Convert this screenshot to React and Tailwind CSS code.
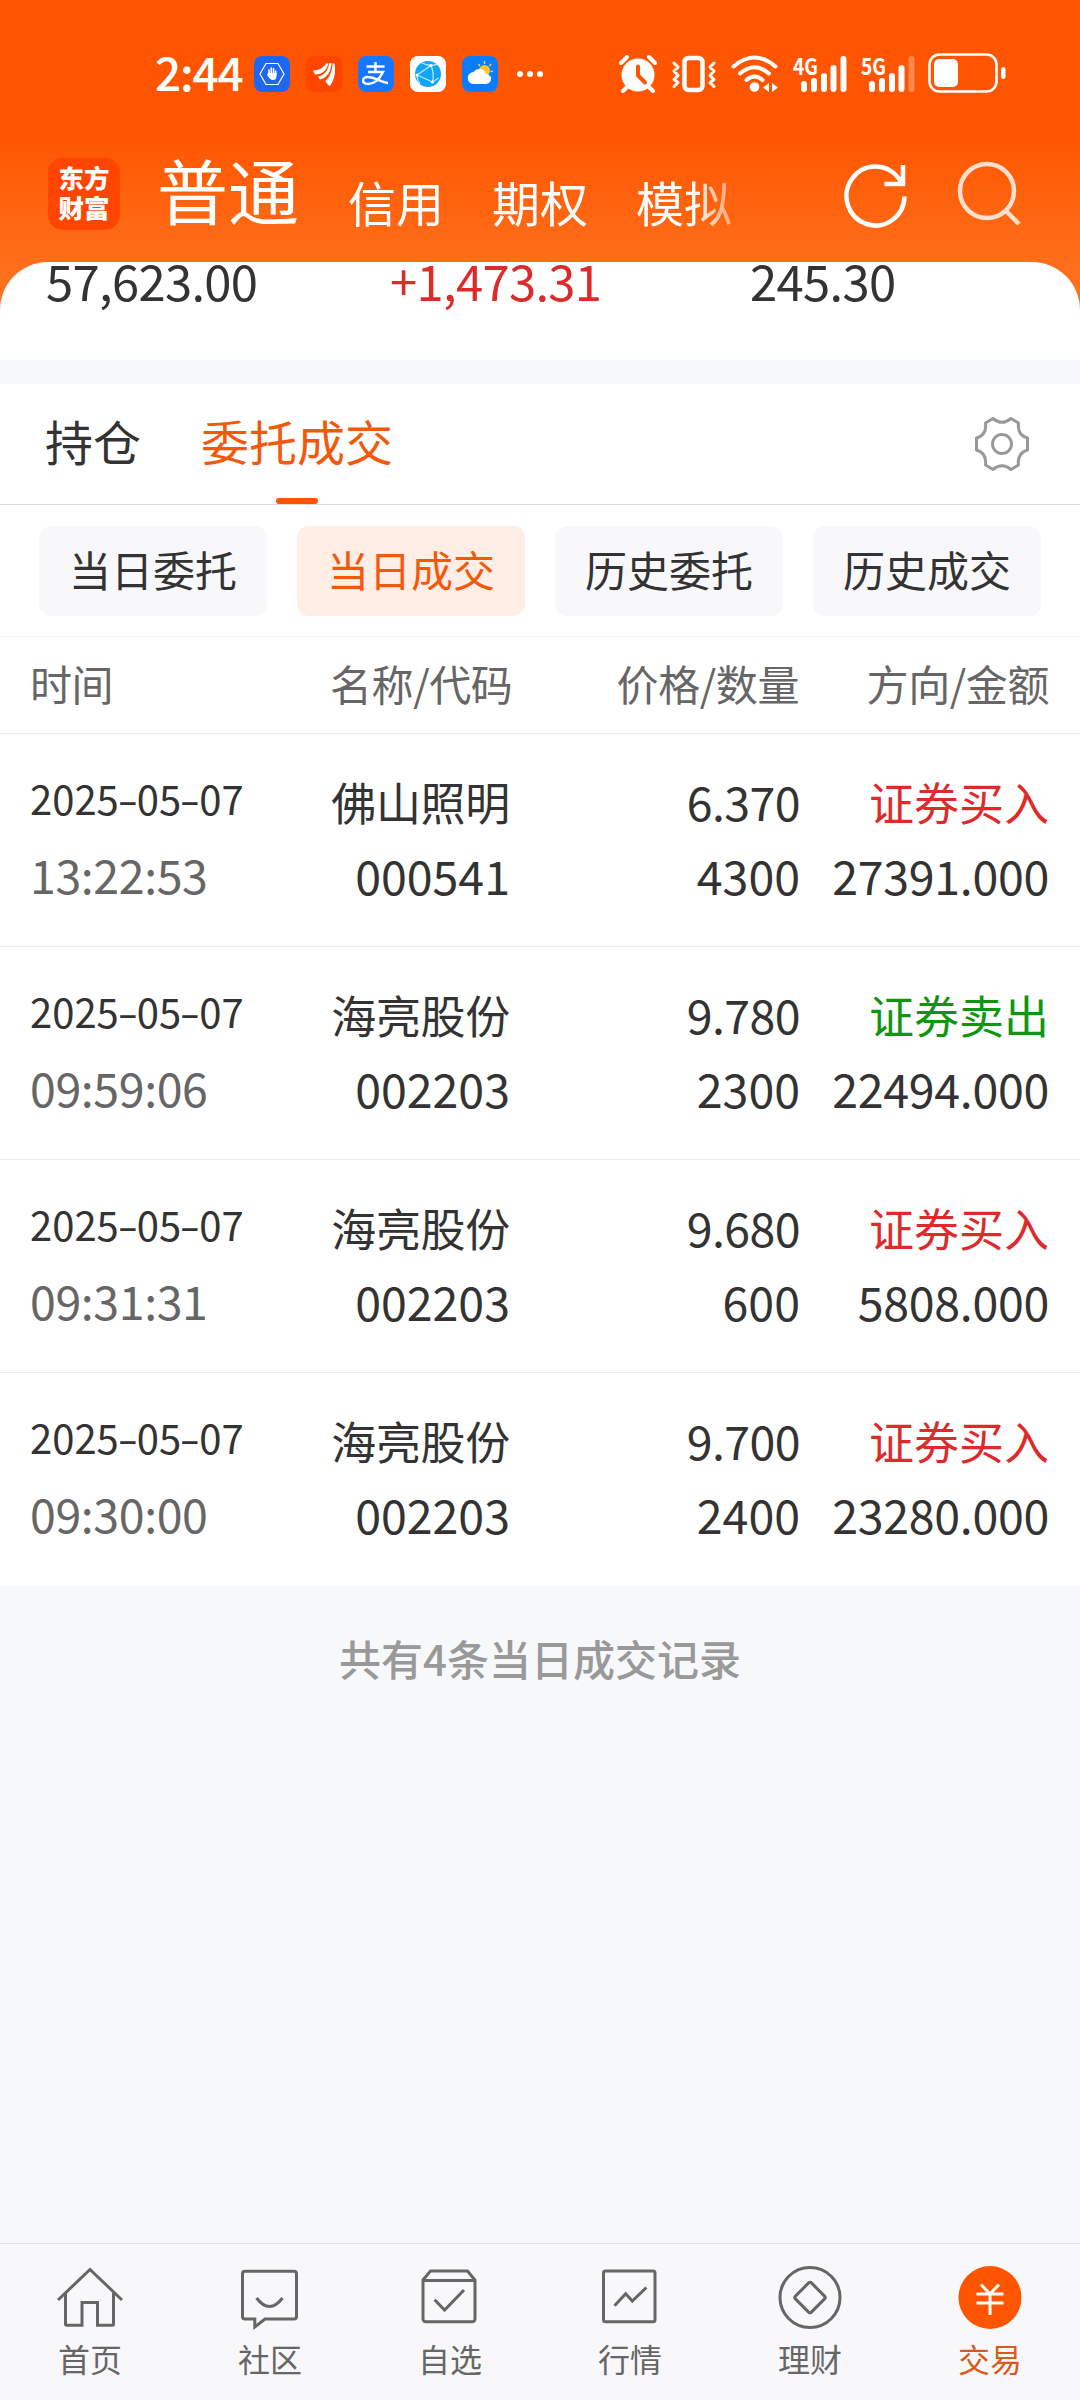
const accounts = ['信用', '期权', '模拟'];

const filters = ['当日委托', '当日成交', '历史委托', '历史成交'];

const trades = [
    { date: '2025-05-07', time: '13:22:53', name: '佛山照明', code: '000541', price: '6.370', qty: '4300', side: 'buy', amount: '27391.000' },
    { date: '2025-05-07', time: '09:59:06', name: '海亮股份', code: '002203', price: '9.780', qty: '2300', side: 'sell', amount: '22494.000' },
    { date: '2025-05-07', time: '09:31:31', name: '海亮股份', code: '002203', price: '9.680', qty: '600', side: 'buy', amount: '5808.000' },
    { date: '2025-05-07', time: '09:30:00', name: '海亮股份', code: '002203', price: '9.700', qty: '2400', side: 'buy', amount: '23280.000' },
];

function AppIcons() {
    return (
        <div className="flex gap-4 ml-[11px]">
            <svg width="36" height="36" viewBox="0 0 36 36">
                <rect width="36" height="36" rx="8" fill="#1f66f5" />
                <path d="M12 7.500h12l6 10.500-6 10.500H12L6 18z" fill="none" stroke="#fff" strokeWidth="1.200" />
                <path d="M15 19v-5M17.300 18v-6M19.600 18v-5.500M21.700 19v-4" stroke="#fff" strokeWidth="1.600" strokeLinecap="round" />
                <path d="M14.200 17h8.300v3c0 3-1.500 4-3.500 4-2.500 0-3.500-1.500-6-5z" fill="#fff" />
            </svg>
            <svg width="36" height="36" viewBox="0 0 36 36">
                <rect width="36" height="36" rx="8" fill="#ff4500" />
                <g fill="#fff">
                    <path d="M7 14.500c6 0 11-3 14-8l1 2.500c-2 6-7 10-13 9.500z" />
                    <path d="M12 20.500c6-1 10.500-6 11-13.500l2.500 0c0 8-4.500 15-11.500 16.500z" />
                    <path d="M19.500 25c4-4 7-10 7-17.500l2 0c1.500 8 0 16-4.500 22.500-2-1-3.500-2.500-4.500-5z" />
                </g>
            </svg>
            <svg width="36" height="36" viewBox="0 0 36 36">
                <rect width="36" height="36" rx="8" fill="#1777ff" />
                <g fill="none" stroke="#fff" strokeWidth="2.400">
                    <path d="M8.500 10.500h18M17.500 6v10M10 16h15c-3 6-8 12-15 12-7 0-6-7 0-7 7 0 12 5 20 6" />
                </g>
            </svg>
            <svg width="36" height="36" viewBox="0 0 36 36">
                <rect width="36" height="36" rx="8" fill="#fff" />
                <circle cx="18" cy="18" r="13" fill="#12a5f5" />
                <g fill="none" stroke="#b5e8ff" strokeWidth="1.300">
                    <path d="M7 19L21 9.500M7 19l15.500 7M21 9.500q3.500 8 1.500 16.500M12 7q4 2 9 2.500l6-1M7 19q0 5 3 9M22.500 26l6-4" />
                </g>
                <circle cx="21" cy="9.500" r="1.500" fill="#fff" />
                <circle cx="7" cy="19" r="1.500" fill="#fff" />
                <circle cx="22.500" cy="26" r="1.500" fill="#fff" />
            </svg>
            <svg width="36" height="36" viewBox="0 0 36 36">
                <rect width="36" height="36" rx="8" fill="#0a7cff" />
                <path d="M22.500 5v3M16.500 8l1.500 2M29 8l-1.500 2M31 15.500h-2.500M29 22l-1-1" stroke="#ffd04a" strokeWidth="1.300" />
                <circle cx="22.500" cy="14.500" r="5.500" fill="#ffc42e" />
                <path d="M12 28a6 6 0 0 1-.5-12 7 7 0 0 1 12.500 2 5 5 0 0 1 0 10z" fill="#fff" />
            </svg>
        </div>
    );
}

function Signal({ label, weak }) {
    return (
        <svg width="56" height="38" viewBox="0 0 56 38" className="ml-[12px] overflow-visible">
            <text x="0" y="19.500" fontSize="23" fontWeight="700" fill="#fff" textLength="25" lengthAdjust="spacingAndGlyphs">{label}</text>
            <g stroke="#fff" strokeWidth="6" strokeLinecap="round">
                <path d="M11 29v5M21 26v8M31 21v13M40.500 13v21" />
                <path d="M50.500 4v30" opacity={weak ? 0.3 : 1} />
            </g>
        </svg>
    );
}

function StatusBar() {
    return (
        <div className="flex items-center h-[112px] pt-[36px] pl-[155px]">
            <span className="w-[88px] whitespace-nowrap text-[46px] leading-[46px] font-medium tracking-[-1.200px] -mt-[7px]">2:44</span>
            <AppIcons />
            <div className="flex gap-[4px] ml-[19px]">
                <i className="size-[6px] rounded-full bg-white" />
                <i className="size-[6px] rounded-full bg-white" />
                <i className="size-[6px] rounded-full bg-white" />
            </div>

            {/* alarm, vibrate, wifi */}
            <svg width="38" height="38" viewBox="0 0 38 38" className="ml-[76px]">
                <circle cx="19" cy="20" r="16.500" fill="#fff" />
                <path d="M2 8l6-6M36 8l-6-6M8 32l-4 4M30 32l4 4" stroke="#fff" strokeWidth="4" strokeLinecap="round" />
                <path d="M19 11.500v9l7 7" fill="none" stroke="#ff5500" strokeWidth="4" strokeLinecap="round" />
            </svg>
            <svg width="46" height="38" viewBox="0 0 46 38" className="ml-[14px]" fill="none" stroke="#fff" strokeLinecap="round" strokeLinejoin="round">
                <rect x="13.500" y="3" width="18" height="32" rx="4" strokeWidth="4.500" />
                <path d="M3 8l4 4-4 4 4 4.500-4 4 4 3-4 4M43 8l-4 4 4 4-4 4.500 4 4-4 3 4 4" strokeWidth="3" />
            </svg>
            <svg width="48" height="38" viewBox="0 0 48 38" className="ml-[14px] mr-[2px]" fill="none" stroke="#fff" strokeWidth="4" strokeLinecap="round">
                <path d="M2.500 11.500q21-18 42 0M9 18.500q14.500-12.500 29 0M15.500 25q8-7 16 0" />
                <circle cx="23.500" cy="32" r="4.800" fill="#fff" stroke="none" />
                <path d="M38 28v9l-6-4.500zM41 28v9l6-4.500z" fill="#fff" stroke="none" />
            </svg>
            <Signal label="4G" />
            <Signal label="5G" weak />
            <svg width="80" height="40" viewBox="0 0 80 40" className="ml-[11px] -mt-[2px]">
                <rect x="1.500" y="1.500" width="67" height="37" rx="10" fill="none" stroke="#fff" strokeWidth="2.600" />
                <rect x="6" y="6" width="24" height="28" rx="5" fill="#fff" />
                <rect x="73" y="14" width="4.500" height="12" rx="2.200" fill="#fff" />
            </svg>
        </div>
    );
}

function Header() {
    return (
        <header className="h-[310px] text-white bg-[linear-gradient(#ff5500_130px,#ff6e1a_262px,#ff741f_310px)]">
            <StatusBar />
            <div className="flex items-start pt-[38px] pl-[48px]">
                <div className="w-[72px] h-[72px] mt-[8px] rounded-[15px] bg-[#ff4500] flex flex-col items-center pt-[4px] text-[25.500px] leading-[30px] font-black">
                    <span>东方</span>
                    <span>财富</span>
                </div>
                <span className="text-[71px] leading-[72px] mt-[2px] ml-[37px] mr-[49px]">普通</span>
                <div className="flex gap-12 mt-[16px] text-[48px] leading-[70px] [mask-image:linear-gradient(90deg,#000_345px,transparent_410px)]">
                    {accounts.map((a) => <span key={a}>{a}</span>)}
                </div>
                <svg width="64" height="66" viewBox="0 0 64 66" className="ml-[112px] mt-[12px]" fill="none" stroke="#fff" strokeWidth="4.500">
                    <path d="M60.500 34.500A29 29.500 0 1 1 54.500 16l4 6" />
                    <path d="M59 3v19H40.500" />
                </svg>
                <svg width="66" height="66" viewBox="0 0 66 66" className="ml-[49px] mt-[11px] opacity-80" fill="none" stroke="#fff" strokeWidth="4.500">
                    <circle cx="30" cy="30" r="27" />
                    <path d="M48 49l14 14" />
                </svg>
            </div>
        </header>
    );
}

function Tabs() {
    return (
        <div className="flex items-start h-[121px] pl-[45px] pr-[50px] bg-white border-b border-[#dcdcdc] text-[48px] leading-[113px]">
            <span>持仓</span>
            <div className="ml-[60px] flex flex-col items-center text-[#f2590d]">
                <span className="h-[114px]">委托成交</span>
                <i className="w-[42px] h-[6px] rounded-full bg-[#ff5500]" />
            </div>
            <svg width="56" height="56" viewBox="-28 -28 56 56" className="ml-auto mt-[32px]" fill="none" stroke="#999" strokeWidth="3" strokeLinejoin="round">
                <path d="M-9-25.500Q0-18 9-25.500L16.500-21Q15-9 25.500-6V6Q15 9 16.500 21L9 25.500Q0 18-9 25.500L-16.500 21Q-15 9-25.500 6V-6Q-15-9-16.500-21Z" />
                <circle r="9.500" />
            </svg>
        </div>
    );
}

function TradeRow({ t }) {
    const [y, m, d] = t.date.split('-');
    const dash = <span className="inline-block w-[18px] text-center scale-x-150">-</span>;
    return (
        <div className="flex h-[213px] px-[31px] pt-[37px] border-b border-[#ebebeb] last:border-white text-[46.500px] leading-[60px] tracking-[-0.3px]">
            <div className="w-[300px] -ml-px">
                <p className="text-[40px] leading-[55px] mb-[18px] tracking-normal">{y}{dash}{m}{dash}{d}</p>
                <p className="text-[#666] tracking-[-0.4px]">{t.time}</p>
            </div>
            <div className="w-[180px] flex flex-col gap-[14px] items-end">
                <p className="text-[45px] whitespace-nowrap pt-px -mb-px">{t.name}</p>
                <p className="tracking-normal">{t.code}</p>
            </div>
            <div className="w-[290px] flex flex-col gap-[14px] items-end">
                <p className="tracking-[-0.6px]">{t.price}</p>
                <p className="tracking-normal">{t.qty}</p>
            </div>
            <div className="flex-1 flex flex-col gap-[14px] items-end">
                {t.side === 'buy'
                    ? <p className="text-[45px] tracking-normal pt-px -mb-px text-[#dd2b2b]">证券买入</p>
                    : <p className="text-[45px] tracking-normal pt-px -mb-px text-[#0f960f]">证券卖出</p>}
                <p>{t.amount}</p>
            </div>
        </div>
    );
}

const navIcons = {
    首页: (
        <>
            <path d="M4 39L36 8.500l32 30.500" />
            <path d="M11.500 32v31.300a1 1 0 0 0 1 1H28V41.500h15.500v22.800h15a1 1 0 0 0 1-1V32" />
        </>
    ),
    社区: (
        <>
            <path d="M11 10.300h49a2.500 2.500 0 0 1 2.500 2.500V55.500a2.500 2.500 0 0 1-2.500 2.500H31l-10.200 8V58H11a2.500 2.500 0 0 1-2.500-2.500V12.800a2.500 2.500 0 0 1 2.500-2.500z" />
            <path d="M22.500 37q13 17 26 0" />
        </>
    ),
    自选: (
        <>
            <path d="M9 19l7.500-9h37l7.500 9v39a2.700 2.700 0 0 1-2.700 2.700H11.700A2.700 2.700 0 0 1 9 58zM9 19.500h52" />
            <path d="M20.600 38.700l10 10.300L50 29" />
        </>
    ),
    行情: (
        <>
            <rect x="9.500" y="10" width="51.500" height="50.700" rx="2" />
            <path d="M20.500 44.700l11.200-12 6.600 7.300L52.400 26.500" />
        </>
    ),
    理财: (
        <>
            <circle cx="36" cy="36.500" r="30" />
            <rect x="24.700" y="25.200" width="22.600" height="22.600" rx="2" transform="rotate(45 36 36.500)" />
        </>
    ),
    交易: (
        <>
            <circle cx="36" cy="36.500" r="31.500" fill="#ff5500" stroke="none" />
            <path d="M27 23.500l9 9.500 9-9.500M22.500 33h27M22.500 42h27M36 33v21" stroke="#fff" />
        </>
    ),
};

function BottomNav() {
    return (
        <nav className="flex h-[157px] pt-[17px] bg-[#f8f8fa] border-t border-[#e2e3e5]">
            {Object.keys(navIcons).map((label) => (
                <div key={label} className="flex-1 flex flex-col items-center">
                    <svg width="72" height="72" viewBox="0 0 72 72" fill="none" stroke="#666" strokeWidth="3">
                        {navIcons[label]}
                    </svg>
                    <span className={label === '交易' ? 'text-[32px] leading-[50px] text-[#d95a1a]' : 'text-[32px] leading-[50px] text-[#666]'}>{label}</span>
                </div>
            ))}
        </nav>
    );
}

export default function App() {
    return (
        <div className="w-[1080px] h-[2400px] flex flex-col overflow-hidden bg-[#f7f8fa] text-[#333] font-['Noto_Sans_CJK_SC',sans-serif]">
            <Header />

            {/* account summary, scrolled under the header */}
            <div className="flex -mt-[48px] h-[98px] shrink-0 rounded-t-[48px] bg-white pl-[46px] text-[49px] leading-[36px] tracking-[-0.7px]">
                <span className="w-[344px]">57,623.00</span>
                <span className="w-[360px] text-[#dd2b2b]">+1,473.31</span>
                <span>245.30</span>
            </div>

            <div className="mt-6 shrink-0">
                <Tabs />
            </div>

            <div className="flex gap-[30px] pl-[39px] pt-[21px] h-[132px] shrink-0 bg-white border-b border-[#f5f5f5]">
                {filters.map((f) => (
                    <button
                        key={f}
                        className={
                            f === '当日成交'
                                ? 'w-[228px] h-[90px] rounded-xl text-[42px] pb-[5px] bg-[#ffeee6] text-[#f2590d]'
                                : 'w-[228px] h-[90px] rounded-xl text-[42px] pb-[5px] bg-[#f8f8fa]'
                        }
                    >
                        {f}
                    </button>
                ))}
            </div>

            <div className="flex h-[97px] shrink-0 px-[31px] bg-white border-b border-[#ebebeb] text-[42px] leading-[92px] text-[#666] tracking-[-0.4px] whitespace-nowrap">
                <span className="w-[300px] -ml-px">时间</span>
                <span className="w-[184px]">名称/代码</span>
                <span className="w-[285px] text-right">价格/数量</span>
                <span className="flex-1 text-right">方向/金额</span>
            </div>

            <div className="bg-white shrink-0">
                {trades.map((t) => <TradeRow key={t.time} t={t} />)}
            </div>

            <p className="flex-1 pt-[41px] text-center text-[42px] leading-[62px] font-medium text-[#999]">共有4条当日成交记录</p>

            <BottomNav />
        </div>
    );
}
